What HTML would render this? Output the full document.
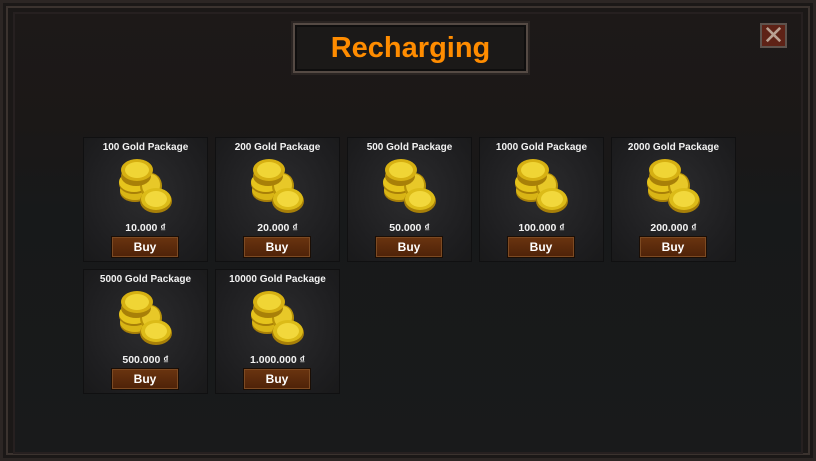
<!DOCTYPE html>
<html><head><meta charset="utf-8"><style>
*{margin:0;padding:0;box-sizing:border-box}
body{width:816px;height:461px;overflow:hidden;background:#161413;font-family:"Liberation Sans",sans-serif;position:relative}
.frame{position:absolute;left:0;top:0;width:816px;height:461px;border:3px solid #2c2624;background:#1b1817}
.frame2{position:absolute;left:6px;top:6px;right:6px;bottom:6px;border:2px solid #3b332f}
.frame3{position:absolute;left:13px;top:12px;right:13px;bottom:7px;border:2px solid #262020;background:linear-gradient(180deg,#1d1918 0%,#1b1817 25%,#17191a 45%,#191a1b 100%)}
.title{position:absolute;left:293px;top:23px;width:235px;height:50px;border:2px solid #554a44;background:#1b1918;box-shadow:0 0 0 2px #2a2422, inset 0 0 0 2px #0f0e0e;color:#ff8c00;font-weight:bold;font-size:29px;text-align:center;line-height:46px}
.close{position:absolute;left:760px;top:23px;width:27px;height:25px;background:#5e2216;border:2px solid #5e534d;color:#b9a293;font-size:26px;line-height:20px;text-align:center}
.card{position:absolute;width:125px;height:125px;background:radial-gradient(ellipse at 50% 45%,#2c2c2e 0%,#1e1e20 70%,#19191a 100%);border:1px solid #101011}
.card .t{position:absolute;top:4px;left:0;width:100%;text-align:center;color:#f2f2f2;font-weight:bold;font-size:10px}
.card svg{position:absolute;left:27px;top:18px}
.card .p{position:absolute;top:84px;left:0;width:100%;text-align:center;color:#f2f2f2;font-weight:bold;font-size:10.5px}
.card .b{position:absolute;left:27px;top:98px;width:68px;height:22px;background:linear-gradient(#6a3410,#4e2208);border:1px solid #1a0e06;box-shadow:inset 0 0 0 1px #7d4a22;color:#fff;font-weight:bold;font-size:12px;text-align:center;line-height:20px}
</style></head><body>
<div class="frame"></div><div class="frame2"></div><div class="frame3"></div>
<div class="title">Recharging</div>
<div class="close">✕</div>
<svg width="0" height="0" style="position:absolute"><defs>
<g id="c">
<ellipse cx="24" cy="36" rx="15" ry="10" fill="#a88008"/><ellipse cx="24" cy="34" rx="15" ry="10" fill="#d9b515"/>
<ellipse cx="23" cy="28" rx="15" ry="10" fill="#a88008"/><ellipse cx="23" cy="26" rx="15" ry="10" fill="#e6c41c"/>
<ellipse cx="40" cy="30" rx="11" ry="13" fill="#b89208"/><ellipse cx="40" cy="29" rx="9" ry="11" fill="#e8c828"/>
<ellipse cx="25" cy="20" rx="15" ry="10" fill="#a88008"/><ellipse cx="26" cy="14" rx="16" ry="11" fill="#d6b012"/><ellipse cx="26" cy="14" rx="12" ry="8" fill="#f0d535"/>
<ellipse cx="45" cy="45" rx="16" ry="12" fill="#a88008"/><ellipse cx="45" cy="43" rx="15" ry="11" fill="#dcbb18"/><ellipse cx="45" cy="43" rx="11" ry="8" fill="#f2d83c"/>
</g></defs></svg>
<div class="card" style="left:83px;top:137px"><div class="t">100 Gold Package</div><svg width="70" height="60"><use href="#c"/></svg><div class="p">10.000 ₫</div><div class="b">Buy</div></div>
<div class="card" style="left:215px;top:137px"><div class="t">200 Gold Package</div><svg width="70" height="60"><use href="#c"/></svg><div class="p">20.000 ₫</div><div class="b">Buy</div></div>
<div class="card" style="left:347px;top:137px"><div class="t">500 Gold Package</div><svg width="70" height="60"><use href="#c"/></svg><div class="p">50.000 ₫</div><div class="b">Buy</div></div>
<div class="card" style="left:479px;top:137px"><div class="t">1000 Gold Package</div><svg width="70" height="60"><use href="#c"/></svg><div class="p">100.000 ₫</div><div class="b">Buy</div></div>
<div class="card" style="left:611px;top:137px"><div class="t">2000 Gold Package</div><svg width="70" height="60"><use href="#c"/></svg><div class="p">200.000 ₫</div><div class="b">Buy</div></div>
<div class="card" style="left:83px;top:269px"><div class="t">5000 Gold Package</div><svg width="70" height="60"><use href="#c"/></svg><div class="p">500.000 ₫</div><div class="b">Buy</div></div>
<div class="card" style="left:215px;top:269px"><div class="t">10000 Gold Package</div><svg width="70" height="60"><use href="#c"/></svg><div class="p">1.000.000 ₫</div><div class="b">Buy</div></div>
</body></html>
